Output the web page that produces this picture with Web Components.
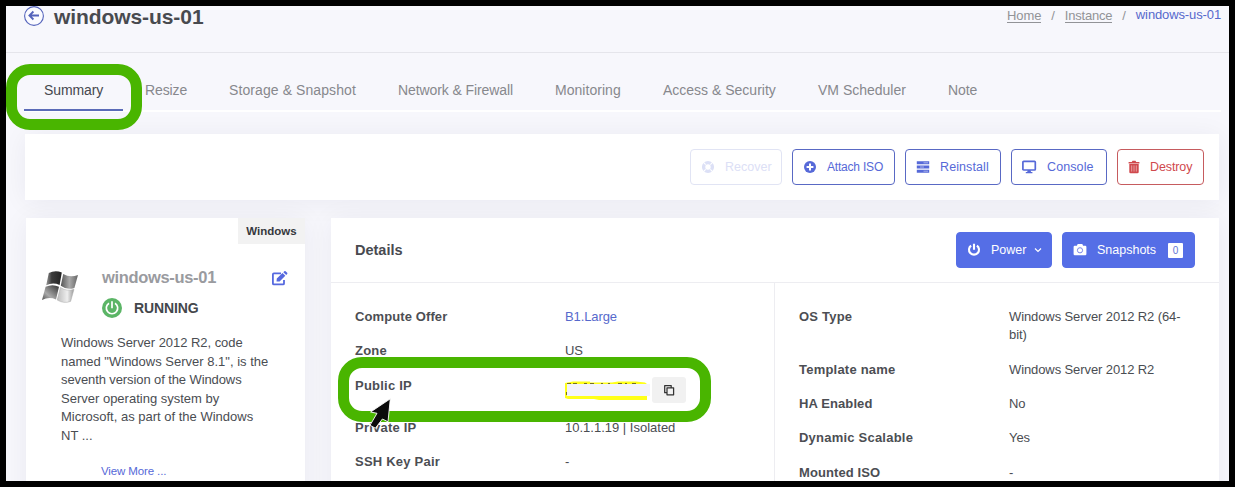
<!DOCTYPE html>
<html lang="en"><head><meta charset="utf-8"><title>windows-us-01</title>
<style>
html,body{margin:0;background:#000;overflow:hidden}
body{font-family:"Liberation Sans",Arial,sans-serif;font-size:13px;color:#4a4d52}
</style></head><body>
<instance-page></instance-page>
<script>
const define=(name,html,init)=>customElements.define(name,class extends HTMLElement{
  constructor(){super();const t=document.createElement('template');t.innerHTML=html;
    this.attachShadow({mode:'open'}).append(t.content.cloneNode(true));}
  connectedCallback(){if(init)init.call(this,this.shadowRoot);}
});
const ICONS={
 ring:'<circle cx="7" cy="7" r="4.4" fill="none" stroke="currentColor" stroke-width="3.4"/><path d="M2.2 2.2l2.5 2.5M11.8 2.2L9.3 4.7M2.2 11.8l2.5-2.5M11.8 11.8L9.3 9.3" stroke="#fff" stroke-width="1.1"/>',
 plus:'<circle cx="7" cy="7" r="6" fill="currentColor"/><path d="M7 3.6v6.8M3.6 7h6.8" stroke="#fff" stroke-width="2"/>',
 server:'<path fill="currentColor" d="M.8 1.3h12.4v3H.8zM.8 5.5h12.4v3H.8zM.8 9.7h12.4v3H.8z"/><path stroke="#fff" stroke-opacity=".6" stroke-width=".8" d="M7.5 2.8h4.5M4 7h4M7.5 11.2h4.5"/>',
 monitor:'<rect x=".9" y="1.4" width="12.4" height="8.6" rx=".8" fill="none" stroke="currentColor" stroke-width="1.7"/><path d="M5.7 10h2.8l.5 2h1.4v1.2H3.8V12h1.4z" fill="currentColor"/>',
 trash:'<path fill="currentColor" d="M1.6 1.9h3.2L5.5.8h3l.7 1.1h3.2v1.5H1.6zM2.3 4.1h9.4V12q0 1.2-1.2 1.2h-7Q2.3 13.2 2.3 12z"/><path stroke="#fff" stroke-opacity=".6" stroke-width=".8" d="M4.7 5.4v6.2M7 5.4v6.2M9.3 5.4v6.2"/>',
 power:'<path d="M4.1 2.6A5 5 0 1 0 9.9 2.6M7 .8v6" fill="none" stroke="currentColor" stroke-width="2.1"/>',
 camera:'<path fill="currentColor" d="M1.8 2.7h2.1l.8-1.7h4.6l.8 1.7h2.1q1.2 0 1.2 1.2v7.2q0 1.2-1.2 1.2H1.8q-1.2 0-1.2-1.2V3.9q0-1.2 1.2-1.2z"/><circle cx="7" cy="7.3" r="2.6" fill="none" stroke="#7a86e8" stroke-width="1"/>',
 copy:'<path d="M5 4.8h6.6v7H5zM4.8 9.7H2.7V2.5h6.5v2" fill="none" stroke="#333" stroke-width="1.25" stroke-linejoin="round"/>'
};
define('ui-icon','<style>:host{display:block;width:14px;height:14px;flex:none}svg{display:block;overflow:visible}</style><svg width="14" height="14" viewBox="0 0 14 14"></svg>',
 function(r){r.querySelector('svg').innerHTML=ICONS[this.getAttribute('name')]});

define('ui-button',`<style>
:host{display:flex;box-sizing:border-box;height:36px;align-items:center;border:1px solid #5969c4;border-radius:4px;color:#5669d8;padding-left:10px;font-size:12.5px;line-height:16px;white-space:nowrap}
:host([kind=muted]){border-color:#e1e4f4;color:#dce0f6}
:host([kind=danger]){border-color:#c65b5e;color:#d0494d;padding-left:9px}
:host([kind=solid]){background:#556ee6;border-color:#556ee6;color:#fff}
span{margin-left:10px;display:flex;align-items:center}
:host([kind=danger]) span{margin-left:9px}
</style><ui-icon></ui-icon><span><slot></slot></span>`,
 function(r){const i=r.querySelector('ui-icon');const n=document.createElement('ui-icon');n.setAttribute('name',this.getAttribute('icon'));i.replaceWith(n)});

define('back-title',`<style>:host{display:flex;align-items:center;gap:10px;font:bold 21px/24px "Liberation Sans",Arial,sans-serif;color:#484a4f}svg{display:block;margin-top:-2px}span{letter-spacing:-.08px}</style>
<svg width="20" height="20" viewBox="0 0 20 20" fill="none" stroke="#5463bb"><circle cx="10" cy="10" r="9.4" fill="#fbfbff" stroke-width="1.1"/><path d="M15 9.5H5.5M9.4 5.5l-4 4 4 4" stroke-width="1.8"/></svg><span><slot></slot></span>`);

define('bread-crumbs',`<style>:host{display:flex;color:#929397;line-height:15px;font-size:13px;white-space:nowrap}
a{border-bottom:1px solid #929397;height:14px;letter-spacing:-.2px}i{font-style:normal;width:23.5px;text-align:center}b{font-weight:normal;color:#5669cc;margin-top:-1px;letter-spacing:-.12px}</style>
<a style="letter-spacing:-.12px">Home</a><i>/</i><a>Instance</a><i>/</i><b>windows-us-01</b>`);

define('page-header',`<style>:host{display:flex;box-sizing:border-box;height:47px;border-bottom:1px solid #e5e5eb;padding:0 8px 0 18px;justify-content:space-between;align-items:flex-start}
back-title{margin-top:-1px}bread-crumbs{margin-top:2px}</style><back-title>windows-us-01</back-title><bread-crumbs></bread-crumbs>`);

define('tab-item',`<style>:host{display:block;box-sizing:border-box;height:34px;padding:0 20px;font-size:14px;line-height:26px;color:#87888d;white-space:nowrap;flex:none}
:host([active]){color:#46484e;border-bottom:2px solid #5b6bb8}</style><slot></slot>`);
define('tab-bar',`<style>:host{display:flex;height:35px;margin:24px 8px 0 18px;box-shadow:inset 0 -2px #fff}
</style><tab-item active style="width:99px;letter-spacing:-.1px">Summary</tab-item><tab-item style="width:86px;padding-left:22px;letter-spacing:-.1px">Resize</tab-item><tab-item style="width:167px;letter-spacing:.09px">Storage &amp; Snapshot</tab-item><tab-item style="width:157px;padding-left:22px;letter-spacing:-.09px">Network &amp; Firewall</tab-item><tab-item style="width:110px;padding-left:22px;letter-spacing:.04px">Monitoring</tab-item><tab-item style="width:155px">Access &amp; Security</tab-item><tab-item style="width:130px">VM Scheduler</tab-item><tab-item style="letter-spacing:-.1px">Note</tab-item>`);

define('action-bar',`<style>:host{display:flex;box-sizing:border-box;height:66px;margin:22px 10px 0 19px;padding:15px;gap:10px;justify-content:flex-end;background:#fff;box-shadow:0 2px 26px rgba(18,20,60,.06)}</style>
<ui-button kind="muted" icon="ring" style="width:92px">Recover</ui-button><ui-button icon="plus" style="width:103px;font-size:12px;letter-spacing:-.2px">Attach ISO</ui-button><ui-button icon="server" style="width:96px;letter-spacing:.1px">Reinstall</ui-button><ui-button icon="monitor" style="width:96px;letter-spacing:.1px"><span style="margin-left:1px">Console</span></ui-button><ui-button kind="danger" icon="trash" style="width:87px;letter-spacing:-.1px">Destroy</ui-button>`);

define('instance-card',`<style>:host{display:block;background:#fff;width:279px;height:300px;box-shadow:0 2px 26px rgba(18,20,60,.06)}
.tag{width:67px;height:26px;margin-left:auto;background:#f2f2f2;font:bold 11.5px/26px "Liberation Sans",Arial,sans-serif;color:#36383d;text-align:center}
.head{display:grid;grid-template-columns:60px 1fr 16px;padding:23px 17px 0 16px;height:54px}
.logo{margin-top:3px}h2{margin:0;font-size:16.5px;line-height:20px;color:#9a9b9f;letter-spacing:-.33px}
.run{display:flex;align-items:center;gap:12px;margin-top:11px;font-weight:bold;font-size:14px;line-height:20px;color:#44474c;letter-spacing:-.1px}
.edit{margin-top:4px}svg{display:block;overflow:visible}
p{margin:13px 0 0 35px;width:225px;line-height:18.5px;white-space:nowrap}
a{display:block;margin:19px 0 0 75px;font-size:11.5px;line-height:14px;color:#5669d8;letter-spacing:-.12px}</style>
<div class="tag">Windows</div><div class="head">
<svg class="logo" width="36" height="33" viewBox="0 0 36 33"><defs><linearGradient id="a" x1="0" x2="1"><stop stop-color="#999"/><stop offset=".35" stop-color="#3c3c3c"/><stop offset="1" stop-color="#222"/></linearGradient><linearGradient id="b" x1="0" x2="1"><stop stop-color="#555"/><stop offset=".5" stop-color="#aaa"/><stop offset="1" stop-color="#666"/></linearGradient><linearGradient id="c" x1="0" x2="1" y1="1" y2="0"><stop stop-color="#555"/><stop offset=".35" stop-color="#aaa"/><stop offset="1" stop-color="#333"/></linearGradient><linearGradient id="d" x1="0" x2="1"><stop stop-color="#bbb"/><stop offset=".6" stop-color="#eee"/><stop offset="1" stop-color="#999"/></linearGradient></defs>
<path fill="url(#a)" d="M6.800 3Q13-.3 19.800 2.400L17.600 15Q11 12 4.200 15.200z"/><path fill="url(#b)" d="M21.200 4Q28 8 36 5L32.400 18Q25 20.500 18.800 15.800z"/><path fill="url(#c)" d="M3.600 16.800Q10.500 13.800 17 16.800L14 29.500Q7 26.500 0 30z"/><path fill="url(#d)" d="M18.400 17.500Q25 21.800 32 19.300L28.600 31.400Q21.500 34 15.200 30z" stroke="#aaa" stroke-width=".5"/></svg>
<div><h2>windows-us-01</h2><div class="run"><svg width="20" height="20" viewBox="0 0 20 20"><circle cx="10" cy="10" r="10" fill="#5bb566"/><path d="M7 5.200a5.700 5.700 0 1 0 6 0M10 3.300v7" fill="none" stroke="#fff" stroke-width="1.7"/></svg>RUNNING</div></div>
<svg class="edit" width="16" height="15" viewBox="0 0 16 15"><path d="M9 2.400H1.900q-1 0-1 1v9q0 1 1 1H11q1 0 1-1V9" fill="none" stroke="#5669df" stroke-width="1.8"/><path d="M4.500 10.600l.3-3L10.500 2l2.800 2.800-5.700 5.600zM11.300 1.200l1-1q.7-.5 1.300 0l1.600 1.600q.5.7 0 1.300l-1 .9z" fill="#5669df"/></svg></div>
<p><span style="letter-spacing:-.04px">Windows Server 2012 R2, code</span><br>named "Windows Server 8.1", is the<br><span style="letter-spacing:-.1px">seventh version of the Windows</span><br>Server operating system by<br>Microsoft, as part of the Windows<br>NT ...</p><a>View More ...</a>`);

define('detail-row',`<style>:host{display:grid;grid-template-columns:210px 1fr;line-height:18px;min-height:18px;margin-bottom:16.4px;white-space:nowrap}
b{color:#4c4e53;letter-spacing:var(--label-spacing,.22px)}div{letter-spacing:-.1px}</style><b></b><div><slot></slot></div>`,function(r){r.querySelector('b').textContent=this.getAttribute('label')});

define('masked-address',`<style>:host{display:flex;width:121px;height:26px;justify-content:space-between}
span{display:grid;place-items:center;width:34px;height:26px;background:#f1f1f1;border-radius:3px}svg{display:block}</style>
<svg width="86" height="26" viewBox="0 0 86 26"><path fill="#ffff1a" d="M0 6l8-1.500h17V5.500h22l6-1h18l9 1 2 1.500v16H34l-5-1H3l-3-1z"/><path fill="#f3f3fc" d="M2 7h83v12H2z"/><path d="M2 6.500h4M8 6.500h4M19 6.500h3M25 6.500h4M36 6.500h2M43 6.500h2M53 6.500h4M60 6.500h2M67 6.500h4M1.500 15v3" stroke="#77721d"/></svg><span><ui-icon name="copy"></ui-icon></span>`);

define('details-card',`<style>:host{display:block;width:888px;height:300px;background:#fff;box-shadow:0 2px 26px rgba(18,20,60,.06)}
header{display:flex;box-sizing:border-box;height:65px;border-bottom:1px solid #ededf1;padding:14px 24px;gap:10px}
h3{margin:0 auto 0 0;font-size:14.5px;line-height:36px;color:#484a50}
main{display:grid;grid-template-columns:443px 1fr;height:235px}section{padding:25px 24px 0}section+section{border-left:1px solid #ededf1}
.ip{height:26px;margin:0 0 16px;line-height:17px}a{color:#5669cc}em{background:#fff;color:#6475d6;font:10px/15px "Liberation Sans",Arial,sans-serif;width:15px;text-align:center;margin-left:12px;border-radius:1px}
.chev{margin-left:8px}.tall{height:36.600px;line-height:18px}.tight{--label-spacing:.1px}</style><header><h3>Details</h3><ui-button kind="solid" icon="power" style="width:96px">Power<svg class="chev" width="8" height="6" viewBox="0 0 8 6"><path d="M1 1.500l3 3 3-3" fill="none" stroke="#fff" stroke-width="1.2"/></svg></ui-button><ui-button kind="solid" icon="camera" style="width:133px">Snapshots<em>0</em></ui-button></header>
<main><section><detail-row class="tight" label="Compute Offer"><a>B1.Large</a></detail-row><detail-row label="Zone">US</detail-row><detail-row label="Public IP" class="ip"><masked-address></masked-address></detail-row><detail-row label="Private IP"><span style="letter-spacing:0">10.1.1.19 | Isolated</span></detail-row><detail-row label="SSH Key Pair">-</detail-row></section>
<section><detail-row class="tall" label="OS Type">Windows Server 2012 R2 (64-<br>bit)</detail-row><detail-row label="Template name" style="margin-bottom:15.900px">Windows Server 2012 R2</detail-row><detail-row class="tight" label="HA Enabled">No</detail-row><detail-row label="Dynamic Scalable">Yes</detail-row><detail-row class="tight" label="Mounted ISO">-</detail-row></section></main>`);

define('mark-ring',`<style>:host{display:block;position:absolute;box-sizing:border-box;border:11px solid #49b500;border-radius:24px}</style>`);
define('mouse-pointer',`<style>:host{display:block;position:absolute;width:24px;height:32px}svg{display:block}</style><svg width="24" height="32" viewBox="0 0 24 32"><path d="M21.300 .8L1.600 14l6.400 1.300L1 27.300l5.400 2.900 7-9.200 5.600 2.800z" fill="#0b0b0b" stroke="#fff" stroke-width=".9"/></svg>`);

define('instance-page',`<style>:host{display:block;position:relative;box-sizing:border-box;width:1235px;height:487px;padding:6px;background:#000;overflow:hidden}
.page{height:475px;width:1223px;background:#f7f7fc;overflow:hidden}.cards{display:flex;gap:26px;margin:18px 0 0 20px}</style>
<div class="page"><page-header></page-header><tab-bar></tab-bar><action-bar></action-bar><div class="cards"><instance-card></instance-card><details-card></details-card></div></div>
<mark-ring style="left:6px;top:64px;width:136px;height:66px"></mark-ring><mark-ring style="left:338px;top:357px;width:373px;height:65px"></mark-ring><mouse-pointer style="left:369px;top:398px"></mouse-pointer>`);
</script></body></html>
